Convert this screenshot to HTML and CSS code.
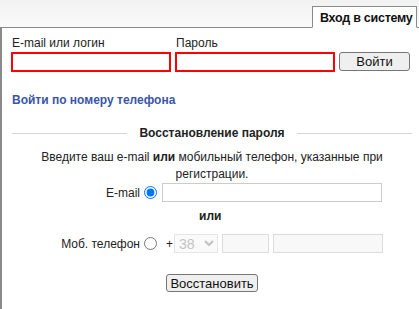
FILE: index.html
```html
<!DOCTYPE html>
<html lang="ru">
<head>
  <meta charset="UTF-8" />
  <title>Вход в систему</title>
  <link rel="stylesheet" href="styles.css">
</head>
<body>
  <div class="tabs">
    <div class="tab">Вход в систему</div>
  </div>

  <div class="panel">
    <!-- Login form -->
    <div class="login-row">
      <div class="field">
        <label for="login" class="field-label">E-mail или логин</label>
        <input type="text" id="login" class="input-error" />
      </div>
      <div class="field">
        <label for="password" class="field-label">Пароль</label>
        <input type="password" id="password" class="input-error" />
      </div>
      <button class="btn btn-login">Войти</button>
    </div>

    <a href="#" class="phone-link">Войти по номеру телефона</a>

    <!-- Password recovery -->
    <div class="section-title"><span>Восстановление пароля</span></div>
    <p class="hint">Введите ваш e-mail <b>или</b> мобильный телефон, указанные при регистрации.</p>

    <div class="recover-form">
      <label for="recEmail" class="rec-label">E-mail</label>
      <input type="radio" name="recType" class="rec-radio" checked />
      <div class="rec-fields">
        <input type="text" id="recEmail" class="input-plain input-email" />
      </div>

      <div class="or-row">или</div>

      <label class="rec-label">Моб. телефон</label>
      <input type="radio" name="recType" class="rec-radio" />
      <div class="rec-fields">
        <span class="plus">+</span>
        <select class="input-plain input-code" disabled>
          <option>38</option>
        </select>
        <input type="text" class="input-plain input-op" disabled />
        <input type="text" class="input-plain input-num" disabled />
      </div>
    </div>

    <div class="actions">
      <button class="btn btn-recover">Восстановить</button>
    </div>
  </div>
</body>
</html>
```

FILE: styles.css
```css
* {
  box-sizing: border-box;
  margin: 0;
  padding: 0;
}

body {
  font-family: 'Liberation Sans', Arial, sans-serif;
  font-size: 12px;
  color: #222;
  background: #fff;
}

/* Tabs */
.tabs {
  height: 28px;
  display: flex;
  justify-content: flex-end;
  align-items: flex-end;
  padding-right: 2px;
  background: linear-gradient(#f2f2f2, #fafafa);
  border-bottom: 1px solid #8a8a8a;
}

.tab {
  width: 105px;
  height: 22px;
  margin-bottom: -1px;
  padding: 4px 0 0 7px;
  background: #fff;
  border: 1px solid #8a8a8a;
  border-bottom-color: #fff;
  font-size: 12.5px;
  font-weight: bold;
  letter-spacing: -0.25px;
  color: #111;
  white-space: nowrap;
  overflow: hidden;
}

/* Panel */
.panel {
  border-left: 2px solid #8a8a8a;
  padding: 8px 8px 14px 9px;
  min-height: 281px;
}

.login-row {
  display: flex;
  align-items: flex-end;
  gap: 4px;
}

.field {
  display: flex;
  flex-direction: column;
}

.field-label {
  font-size: 12px;
  line-height: 15px;
  margin-left: 1px;
  margin-bottom: 1px;
}

.input-error {
  width: 160px;
  height: 20px;
  border: 2px solid #f00;
  outline: none;
  font-size: 12px;
}

.btn {
  font-family: 'Liberation Sans', Arial, sans-serif;
  font-size: 13px;
  color: #111;
  background: #efefef;
  border: 1px solid #767676;
  border-radius: 3px;
  cursor: pointer;
}

.btn-login {
  width: 71px;
  height: 19px;
  margin-bottom: 1px;
}

.phone-link {
  display: inline-block;
  margin-top: 21px;
  margin-left: 1px;
  font-weight: bold;
  color: #3a56a8;
  text-decoration: none;
  line-height: 15px;
}

/* Recovery section */
.section-title {
  display: flex;
  align-items: center;
  gap: 12px;
  margin: 18px 0 0 1px;
  width: 400px;
  font-weight: bold;
  line-height: 15px;
}

.section-title::before,
.section-title::after {
  content: "";
  flex: 1;
  height: 1px;
  background: #d6d6d6;
}

.hint {
  width: 400px;
  margin: 8px 0 0 1px;
  padding: 0 16px;
  text-align: center;
  line-height: 17px;
}

.recover-form {
  display: grid;
  grid-template-columns: 127px 22px auto;
  align-items: center;
  margin-left: 2px;
}

.rec-label {
  text-align: right;
}

.rec-radio {
  width: 13px;
  height: 13px;
  margin: 0 0 0 4px;
}

.rec-fields {
  display: flex;
  align-items: center;
  gap: 4px;
}

.input-plain {
  height: 19px;
  border: 1px solid #ccc;
  font-size: 12px;
  outline: none;
}

.input-email {
  width: 220px;
}

.or-row {
  grid-column: 1 / -1;
  padding-left: 186px;
  font-weight: bold;
  line-height: 15px;
  margin: 7px 0 10px;
}

.plus {
  margin-left: 4px;
  margin-right: -3px;
}

.input-code,
.input-op,
.input-num {
  background: #f8f8f8;
  border-color: #dcdcdc;
  color: #aaa;
}

.input-code {
  width: 44px;
  font-family: 'Liberation Sans', Arial, sans-serif;
  font-size: 14px;
}

.input-op {
  width: 47px;
}

.input-num {
  width: 110px;
}

.actions {
  width: 400px;
  margin-top: 21px;
  text-align: center;
}

.btn-recover {
  height: 18px;
  padding: 0 3px;
  margin-left: 2px;
}
```
